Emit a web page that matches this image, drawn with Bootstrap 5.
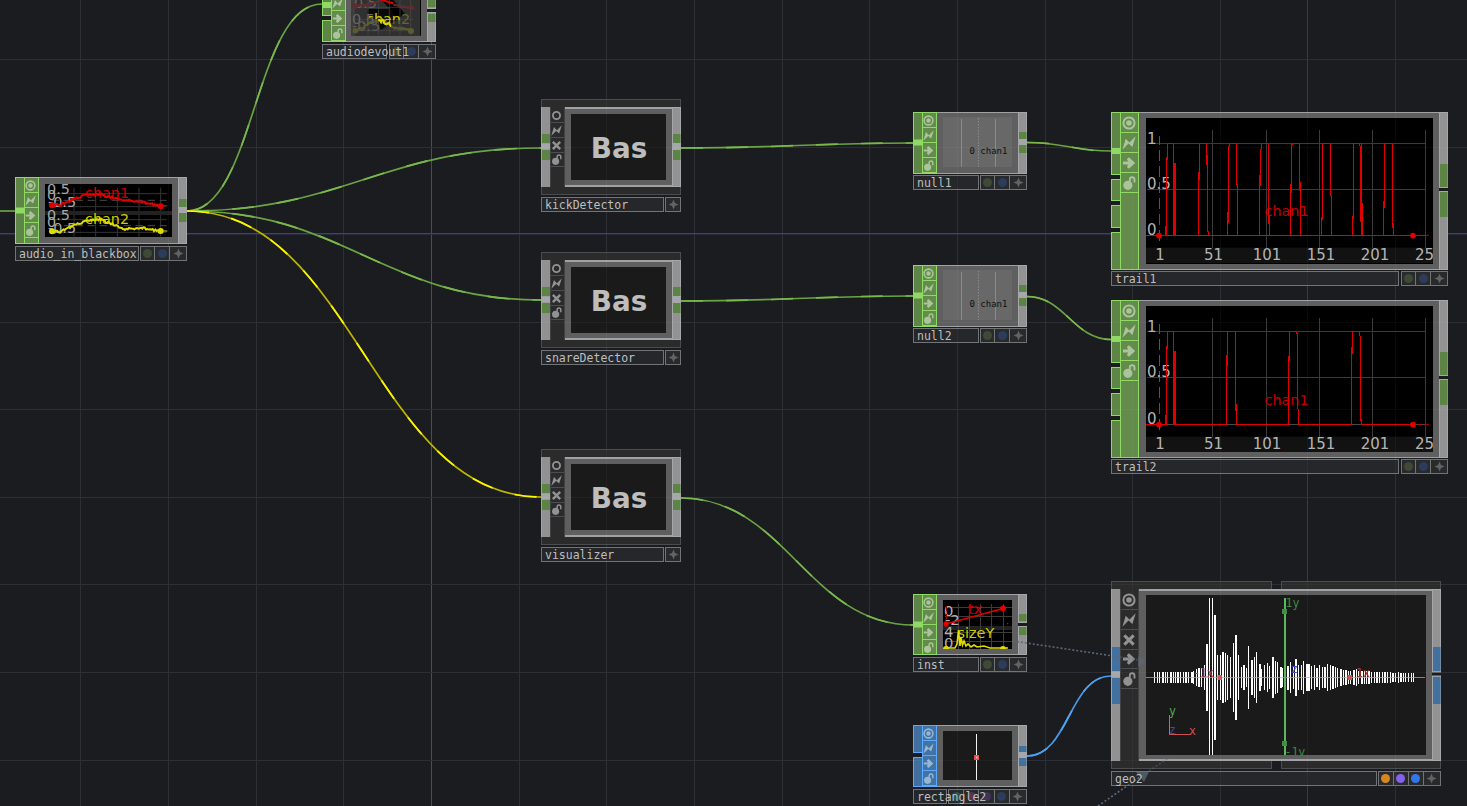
<!DOCTYPE html>
<html lang="en">
<head>
<meta charset="utf-8">
<meta name="viewport" content="width=device-width, initial-scale=1">
<title>Network editor</title>
<link href="https://cdn.jsdelivr.net/npm/bootstrap@5.3.0/dist/css/bootstrap.min.css" rel="stylesheet">
<style>
  body { background: #1b1c20; font-family: "DejaVu Sans Mono", "Liberation Mono", monospace; }
  .network { height: 806px; width: 1467px; }
  .layer { position: absolute; left: 0; top: 0; pointer-events: none; }
  .op { position: absolute; }
  .cap-row { height: 8px; gap: 9px; }
  .cap-row > div { background: #2b2b2b; border: 1px solid #4b4c50; border-width: 1px 1px 0; }
  .cap-row.under > div { border-width: 0 1px 1px; }
  .op svg { display: block; flex: none; }
  .flagcol { flex: none; border: 1px solid #414246; border-width: 0 1px; background: #2b2b2b; color: #929292; }
  .flagcell { flex: none; border-bottom: 1px solid #4c4d51; padding: 1px 2px 0 0; }
  .chop .flagcol { background: #628b4c; border-color: #8fd965; border-width: 1px; color: #abc49c; }
  .chop .flagcell { border-color: #8fd965; }
  .sop .flagcol { background: #4273a4; border-color: #5aabff; border-width: 1px; color: #98b5d2; }
  .sop .flagcell { border-color: #5aabff; }
  .frame { background: #5f5f5f; border: solid #a0a1a5; border-width: 1px 0 1px; }
  .comp .frame { border-width: 2px 0; }
  .namebar { height: 16px; }
  .namebox { background: #25272a; border: 1px solid #727377; height: 15px; color: #bebebe; font-size: 11.5px; line-height: 15px; padding-left: 3px; white-space: pre; }
  .namebox span { position: relative; z-index: 2; }
  .cells { background: #292a2b; border: 1px solid #727377; height: 15px; }
  .cells > div + div { border-left: 1px solid #727377; }
  .pip { width: 9px; height: 9px; border-radius: 50%; }
  .sans { font-family: "DejaVu Sans", sans-serif; font-size: 14.4px; }
  .sans.axis { font-size: 15px; }
  .sans.tight { font-size: 14.8px; }
  .mono { font-family: "DejaVu Sans Mono", monospace; }
</style>
</head>
<body class="m-0 overflow-hidden">
<svg width="0" height="0" class="position-absolute">
  <defs>
    <symbol id="i-target" viewBox="0 0 12 12"><circle cx="6" cy="6" r="4.8" fill="none" stroke="currentColor" stroke-width="1.7"/><circle cx="6" cy="6" r="2.4" fill="currentColor"/></symbol>
    <symbol id="i-ring" viewBox="0 0 12 12"><circle cx="6" cy="6" r="3.9" fill="none" stroke="currentColor" stroke-width="2"/></symbol>
    <symbol id="i-bolt" viewBox="0 0 12 12"><path d="M0.3 11.7 3.2 2.3 6.4 5.6 11.8.3 8.9 9.4 5.6 6.5Z" fill="currentColor"/></symbol>
    <symbol id="i-x" viewBox="0 0 12 12"><path d="M2 2 10 10M10 2 2 10" stroke="currentColor" stroke-width="2.6"/></symbol>
    <symbol id="i-arrow" viewBox="0 0 12 12"><path d="M.8 4.8H5.2L4.2 2.6 6 1 11.3 6 6 11 4.2 9.4 5.2 7.2H.8Z" fill="currentColor"/></symbol>
    <symbol id="i-lock" viewBox="0 0 12 12"><circle cx="5" cy="8" r="3.9" fill="currentColor"/><path d="M6.7 5V3.1a2 2 0 0 1 4 0V5.6" fill="none" stroke="currentColor" stroke-width="1.6"/></symbol>
    <symbol id="i-plus" viewBox="0 0 12 12"><path d="M6 .5 7.6 4.4 11.5 6 7.6 7.6 6 11.5 4.4 7.6.5 6 4.4 4.4Z" fill="#636363"/></symbol>
  </defs>
</svg>

<main class="network position-relative overflow-hidden" id="network">
  <svg class="layer" id="grid" width="1467" height="806"></svg>
  <svg class="layer" width="1467" height="806" fill="none" stroke="#6aa344" stroke-width="1.7" id="wires"></svg>
</main>

<script src="https://cdn.jsdelivr.net/npm/bootstrap@5.3.0/dist/js/bootstrap.bundle.min.js"></script>
<script>
const net = document.getElementById('network');

// background grid, one major line every ten units
function gridLines(minor, vmajor, hmajor) {
  let s = '';
  for (let i = 0; i < 16; i++) {
    const x = Math.floor(80.9 + i * 87.65), major = i === 4 || i === 14;
    s += `<path d="M${x - (i === 14 ? 1 : 0) + .5} 0V806" stroke="${i === 4 ? vmajor : major ? hmajor : minor}"/>`;
  }
  for (let i = 0; i < 9; i++) {
    const y = Math.floor(59.4 + i * 87.6);
    if (i !== 2) s += `<path d="M0 ${y + .5}H1467" stroke="${minor}"/>`;
  }
  return s;
}
document.getElementById('grid').innerHTML = gridLines('#26272f', '#46435e', '#303052') + '<path d="M0 233.5H1467" stroke="#41406c"/><path d="M0 234.5H1467" stroke="#292a42"/>';

// wires, with a lighter dash running along each
const wires = [
  [187, 211, 322, 4, .5], [187, 211, 541, 148], [187, 211, 541, 300],
  [187, 211, 541, 497, .47, '#bcb600', '#fbf600'], [681, 148, 913, 143], [681, 301, 913, 296],
  [1027, 142.5, 1111, 151], [1027, 296.5, 1111, 339.5], [681, 498, 913, 625],
  [1027, 756, 1111, 676, .5, '#479be8', '#4ea3f0']
];
document.getElementById('wires').innerHTML = '<path d="M0 211H15"/>' + wires.map(([a, b, c, d, k = .45, col, hi]) => {
  const h = (c - a) * k, p = `M${a} ${b}C${a + h} ${b} ${c - h} ${d} ${c} ${d}`;
  return `<path d="${p}" ${col ? `stroke="${col}"` : ''}/><path d="${p}" stroke="${hi || '#7ab84c'}" stroke-dasharray="22 23"/>`;
}).join('');

const FAM = {
  chop: { hi: '#8fd965', fill: '#5d8546', port: '#5c8444' },
  sop: { hi: '#5aabff', fill: '#41709f', port: '#42719f' },
  comp: { port: '#5c8444' }, geo: { port: '#42719f' }
};
const PIPS = { g: '#3e4a35', b: '#2b3c5c', t: '#28504c', m: '#56344f', v: '#3e3558', O: '#d6881d', V: '#8463ea', B: '#3277ea' };

function inputCol(o) {
  const f = FAM[o.fam];
  let s = '';
  if (f.hi) {
    o.ins.forEach(([a, b]) => s += `<rect x=".5" y="${a - o.y + .5}" width="9" height="${b - a - 1}" fill="${f.fill}" stroke="${f.hi}"/>`);
    if (o.plug) s += `<rect x="0" y="${o.plug - o.y - 3}" width="9" height="6" fill="${f.hi}"/>`;
  } else {
    s += `<rect width="9" height="${o.h}" fill="#919191"/><rect width="1" height="${o.h}" fill="#a3a3a6"/>`;
    o.ins.forEach(([a, b]) => s += `<rect x="1" y="${a - o.y}" width="8" height="${b - a}" fill="${f.port}"/>`);
    s += `<rect y="${o.plug - o.y - 3}" width="9" height="6" fill="#a6a7aa"/>`;
  }
  return `<svg width="9" height="${o.h}">${s}</svg>`;
}
function outputCol(o) {
  const f = FAM[o.fam];
  let s = `<rect width="9" height="${o.h}" fill="#929292"/><path d="M.5 0V${o.h}M0 .5H9M0 ${o.h - .5}H9M8.5 0V${o.h}" stroke="#a6a7aa"/>`;
  o.outs.forEach(([a, b]) => s += `<rect x="1" y="${a - o.y}" width="7.5" height="${b - a}" fill="${f.port}"/>`);
  if (o.split) s += `<rect y="${o.split - o.y - 2.5}" width="9" height="5" fill="#a6a7aa"/><rect y="${o.split - o.y - 1.5}" width="9" height="3" fill="#1b1c20"/>`;
  else s += `<rect y="${(o.outs[0][1]) - o.y}" width="9" height="${o.outs[1][0] - o.outs[0][1]}" fill="#a6a7aa"/>`;
  return `<svg width="9" height="${o.h}">${s}</svg>`;
}
function cells(list) {
  return list.split('').map(c => `<div class="d-flex flex-fill align-items-center justify-content-center">` +
    (c === '+' ? '<svg width="11" height="11"><use href="#i-plus"/></svg>' : `<div class="pip" style="background:${PIPS[c]}"></div>`) + '</div>').join('');
}
function addOp(o) {
  const big = o.pitch > 18, comp = o.fam === 'comp' || o.fam === 'geo';
  const cap = comp ? (o.fam === 'geo' ? '<div style="width:161px"></div><div class="flex-fill"></div>' : '<div class="w-100"></div>') : '';
  const sz = big ? 14 : 11;
  const flags = o.flags.map((n, i) => `<div class="flagcell d-flex align-items-center justify-content-center" style="height:${i ? o.pitch : o.pitch + (comp ? 1.2 : .5)}px"><svg width="${sz}" height="${sz}"><use href="#i-${n}"/></svg></div>`).join('');
  const [vx, vy, vw, vh] = o.view;
  const fx = o.x + 9 + o.fw;
  const el = document.createElement('section');
  el.className = `op ${comp ? 'comp' : o.fam}`;
  el.style.cssText = `left:${o.x}px;top:${o.y - (comp ? 8 : 0)}px;width:${o.w}px`;
  const bt = comp ? 2 : 1;
  el.innerHTML =
    (cap ? `<div class="cap-row d-flex">${cap}</div>` : '') +
    `<div class="d-flex" style="height:${o.h}px">${inputCol(o)}
      <div class="flagcol d-flex flex-column" style="width:${o.fw}px">${flags}</div>
      <div class="frame flex-fill" style="padding:${vy - o.y - bt}px 0 0 ${vx - fx}px"><svg width="${vw}" height="${vh}" viewBox="${vx} ${vy} ${vw} ${vh}">${o.draw}</svg></div>
      ${outputCol(o)}</div>` +
    (cap ? `<div class="cap-row under d-flex">${cap}</div>` : '') +
    `<div class="namebar d-flex justify-content-between" style="margin-top:${o.gap}px"><div class="namebox" style="width:${o.nw}px"><span>${o.name}</span></div><div class="cells d-flex" style="width:${o.cells.length * 15.8}px">${cells(o.cells)}</div></div>`;
  net.appendChild(el);
}

const std = ['target', 'bolt', 'arrow', 'lock'], cmp = ['ring', 'bolt', 'x', 'lock'];
const bg = (v, c) => `<rect x="${v[0]}" y="${v[1]}" width="${v[2]}" height="${v[3]}" fill="${c}"/>`;

// jittered polyline through key points
function noisy(pts, amp) {
  let d = '', s = 7;
  for (let i = 0; i < pts.length - 1; i++) {
    const [x0, y0] = pts[i], [x1, y1] = pts[i + 1];
    for (let x = x0; x < x1; x += 4) {
      s = (s * 73 + 41) % 101;
      d += `${d ? 'L' : 'M'}${x} ${(y0 + (y1 - y0) * (x - x0) / (x1 - x0) + (s / 101 - .5) * amp).toFixed(1)}`;
    }
  }
  const e = pts[pts.length - 1];
  return d + `L${e[0]} ${e[1]}`;
}

// audio_in_blackbox (drawn in thirds of a pixel from 0,165)
const audioDraw = bg([45, 184, 127, 53], '#000') + `<g transform="translate(0 165) scale(.33333)">
 <path d="M155 86H500M155 125H500M155 164H500M155 202H500M222 68V215M287 68V215M352 68V215M417 68V215M482 68V215" stroke="#353535" stroke-width="3"/>
 <rect x="135" y="138" width="381" height="12" fill="#222"/>
 <path d="M155 106H500M155 182H500" stroke="#484848" stroke-width="3" stroke-dasharray="22 14"/></g>
 <g class="sans" fill="#a8a8a8"><text x="47" y="194">0.5</text><text x="47" y="200">0</text><text x="48" y="206.5">-0.5</text><text x="47" y="220">0.5</text><text x="47" y="227">0</text><text x="48" y="232.5">-0.5</text>
 <text x="85" y="197.5" fill="#c60000">chan1</text><text x="85" y="223.5" fill="#cccc00">chan2</text></g>
 <g transform="translate(0 165) scale(.33333)" fill="none" stroke-width="6">
 <path d="${noisy([[156,121],[185,119],[222,103],[262,88],[300,89],[340,99],[390,107],[440,114],[482,123]], 7)}" stroke="#e00000"/>
 <path d="${noisy([[156,200],[182,200],[225,180],[275,164],[305,165],[345,181],[375,192],[430,190],[482,198]], 7)}" stroke="#e0dc00"/>
 <path d="M488 122H502" stroke="#e00000" stroke-width="3"/><path d="M488 198H502" stroke="#e0dc00" stroke-width="3"/>
 <g stroke="none" fill="#e00000"><circle cx="156" cy="121" r="9"/><circle cx="482" cy="124" r="9"/></g>
 <g stroke="none" fill="#e0dc00"><circle cx="156" cy="199" r="9"/><circle cx="482" cy="198" r="9"/></g></g>`;

addOp({ name: 'audio_in_blackbox', x: 15, y: 177, w: 172, h: 67, fam: 'chop', fw: 15, pitch: 14.8, flags: std, ins: [[177, 244]], plug: 210.5,
  outs: [[199, 207], [213, 222]], view: [45, 184, 127, 53], nw: 124, cells: 'gb+', gap: 2, draw: audioDraw });

const devDraw = bg([351, -15, 70, 51], '#3d3d3d') + `<rect x="355" y="-15" width="66" height="51" fill="#303030"/>
 <g transform="translate(310 0) scale(.33333)">
 <path d="M172 27H262L280 45 260 60 212 90 205 62 172 50Z" fill="#0a0a0a"/><path d="M215 0H250L285 42 262 52Z" fill="#000"/>
 <path d="M174 0V105M206 0V105M238 0V105M270 0V105M302 0V105M135 22H310M135 58H310M135 92H310" stroke="#4b4b4b" stroke-width="2"/><path d="M332 0V106" stroke="#000" stroke-width="3"/></g>
 <g class="sans"><text x="354" y="8" fill="#626262">0.5</text><text x="352" y="24" fill="#666">0.5</text><text x="352" y="31" fill="#5a5a5a">-0.5</text>
 <text x="366" y="24" fill="#65652e">chan2</text></g>
 <g class="sans" clip-path="url(#devclip)"><text x="366" y="24" fill="#c6c200" aria-hidden="true">chan</text></g><clipPath id="devclip"><path d="M369 10H400V20H390V24H382V19H369Z"/></clipPath>
 <g transform="translate(310 0) scale(.33333)" fill="none" stroke-width="6"><path d="M135 18 180 13 218 0M250 14 302 24" stroke="#66292d"/><path d="M215 0 250 10" stroke="#e00000"/>
 <path d="${noisy([[135,92],[160,82],[184,67],[214,62],[250,82],[303,92]], 7)}" stroke="#5b5b32"/><path d="${noisy([[205,60],[222,65],[243,78]], 10)}" stroke="#ddd800"/>
 <g stroke="none"><circle cx="136" cy="92" r="8" fill="#5b5b32"/><circle cx="303" cy="93" r="9" fill="#5b5b32"/><circle cx="304" cy="23" r="8" fill="#66292d"/><circle cx="136" cy="18" r="8" fill="#66292d"/></g></g>`;
addOp({ name: 'audiodevout1', x: 322, y: -20, w: 114, h: 62, fam: 'chop', fw: 15, pitch: 14.8, flags: ['target', 'bolt', 'arrow', 'lock'], ins: [[-20, 16], [20, 42]], plug: 5,
  outs: [[0, 7], [14, 22]], split: 10.5, view: [351, -15, 70, 51], nw: 65, cells: 'gb+', gap: 2, draw: devDraw });

[['kickDetector', 107], ['snareDetector', 260], ['visualizer', 457]].forEach(([name, y]) => addOp({
  name, x: 541, y, w: 140, h: 80, fam: 'comp', fw: 15, pitch: 14.8, flags: cmp, ins: [[y + 27, y + 36], [y + 43, y + 53]], plug: y + 39.5,
  outs: [[y + 27, y + 36], [y + 43, y + 53]], view: [571, y + 7, 95, 66], nw: 123, cells: '+', gap: 2,
  draw: bg([571, y + 7, 95, 66], '#1a1a1a') + `<text x="619" y="${y + 50.5}" text-anchor="middle" class="sans" style="font-size:27.8px" font-weight="700" fill="#bdbdbd">Bas</text>`
}));

[['null1', 112], ['null2', 265]].forEach(([name, y]) => addOp({
  name, x: 913, y, w: 114, h: 62, fam: 'chop', fw: 15, pitch: 14.8, flags: std, ins: [[y, y + 62]], plug: y + 30.5,
  outs: [[y + 20, y + 27], [y + 33, y + 41]], view: [943, y + 5, 69, 50], nw: 66, cells: 'gb+', gap: 1,
  draw: bg([943, y + 5, 69, 50], '#686868') + `<path d="M961.5 ${y + 7}v48M995.5 ${y + 7}v48" stroke="#8b8b8b"/><path d="M978.5 ${y + 6}v49" stroke="#8b8b8b" stroke-dasharray="1.5 1.5"/>
   <text x="969.5" y="${y + 41.5}" class="mono" font-size="9" fill="#111">0 chan1</text>`
}));

// trail charts, both share axes; paths are in thirds of a pixel from the chart origin
function trail(name, y, top, mid, base, oy, wave) {
  const v = [1146, y + 6, 287, 146];
  const d = bg(v, '#000') + `<g transform="translate(1100 ${oy}) scale(.33333)">
   <rect x="138" y="${base + 37}" width="861" height="46" fill="#121212"/>
   <g fill="none" stroke-width="3" shape-rendering="crispEdges">
   <path d="M142 ${top}H977M142 ${mid}H977M337 ${top - 40}V${base + 37}M499 ${top - 40}V${base + 37}M658 ${top - 40}V${base + 37}M817 ${top - 40}V${base + 37}M976 ${top - 40}V${base + 37}" stroke="#3a3a3a"/>
   <path d="M138 ${base}H977" stroke="#4a4a4a"/><path d="M178 ${base + 16}V${top - 22}" stroke="#555" stroke-dasharray="32 16"/></g></g>
   <g class="sans axis" fill="#b4b4b4"><text x="1147" y="${oy + top / 3 + .7}">1</text><text x="1147" y="${oy + mid / 3}">0.5</text><text x="1147" y="${oy + base / 3}">0</text>
   <g text-anchor="middle" transform="translate(0 ${oy + (base + 75) / 3})"><text x="1160">1</text><text x="1213.5">51</text><text x="1267">101</text><text x="1321">151</text><text x="1375">201</text><text x="1415" text-anchor="start">25</text></g></g>
   <text class="sans" x="1264.5" y="${oy + (base - 57) / 3 - .2}" fill="#c40000">chan1</text>
   <g transform="translate(1100 ${oy}) scale(.33333)"><path d="${wave}" fill="none" stroke="#df0000" stroke-width="3.4" shape-rendering="crispEdges"/>
   <path d="M954 ${base}h12M974 ${base}h13" stroke="#c00000" stroke-width="3"/>
   <g fill="#df0000"><circle cx="177" cy="${base + 1}" r="8.5"/><circle cx="939" cy="${base + 1}" r="8.5"/></g></g>`;
  addOp({ name, x: 1111, y, w: 337, h: 158, fam: 'chop', fw: 19, pitch: 19.8, flags: std,
    ins: [[y, y + 63], [y + 67, y + 89], [y + 93, y + 116], [y + 120, y + 158]], plug: y + 39,
    outs: [[y + 52, y + 76], [y + 80, y + 105]], split: y + 77.5, view: v, nw: 288, cells: 'gb+', gap: 1, draw: d });
}
trail('trail1', 112, 130, 268, 406, 100,
 'M138 406H198L200 201 203 130H221V190H225V406H222V190M225 406H295L297 226 299 130H319L321 168 323 388 326 406H382L384 366 386 144 389 130H409L410 249 412 260V406H478L481 168 485 130H505L507 366 509 406H571L575 136 577 130H598L600 255 602 406H664L667 333 668 130H691L692 284 694 290V406H757L761 303V130H784V312H787V406H784V312M778 130 782 145V365M787 406H850L853 272 854 130H877L878 342 880 406H939');
trail('trail2', 300, 124, 262, 403, 290,
 'M138 403H198L200 198 203 124H221V186H225V403H222V186M225 403H379L380 309 382 124H406L407 297 409 403H565L566 252 569 124H589L592 133V356L595 358V403H754L755 246 757 124H778V137L781 139V363L784 403H939');

addOp({ name: 'inst', x: 913, y: 594, w: 114, h: 61, fam: 'chop', fw: 15, pitch: 14.8, flags: std, ins: [[594, 655]], plug: 624.5,
  outs: [[614, 621], [627, 635]], split: 624.5, view: [943, 600, 69, 49], nw: 66, cells: 'gb+', gap: 2,
  draw: bg([943, 600, 69, 49], '#000') + `<rect x="943" y="626" width="69" height="4" fill="#222"/>
  <path d="M945 607.5h67M945 616.5h67M945 632.5h67M945 641.5h67M958.5 604v45M969.5 604v45M980.5 604v45M991.5 604v45M1003.5 604v45" stroke="#3c3c3c"/>
  <g class="sans tight" fill="#b4b4b4"><text x="944" y="616">0</text><text x="945" y="624.5">-2</text><text x="944" y="637">4</text><text x="944" y="648">0</text>
  <text x="968" y="613.7" fill="#c60000">tx</text></g><text class="sans" x="957.5" y="638" fill="#cccc00">sizeY</text>
  <path d="M946 624 1003 608.5" stroke="#df0000" stroke-width="1.4"/><path d="M946.5 606v19" stroke="#a00000" stroke-dasharray="5 3"/><g fill="#df0000"><circle cx="946" cy="624" r="2.7"/><circle cx="1003" cy="608.5" r="3"/><rect x="1007" y="623" width="1.3" height="1.3"/></g>
  <path d="M944 648H955L957 644 958.5 630 960 646 961 637 962.5 645 964 641 966 646 968 644 971 647 974 645 977 647 984 646 990 648H1008" fill="none" stroke="#e0dc00" stroke-width="1.6"/><circle cx="946" cy="649" r="3" fill="#e0dc00"/><circle cx="1003" cy="649" r="3" fill="#e0dc00"/>` });

addOp({ name: 'rectangle2', x: 913, y: 725, w: 114, h: 62, fam: 'sop', fw: 15, pitch: 14.8, flags: std, ins: [[725, 753], [757, 787]],
  outs: [[746, 752], [758, 766]], view: [943, 731, 69, 49], nw: 34, cells: 'tmvb+', gap: 2,
  draw: bg([943, 731, 69, 49], '#1a1a1a') + '<path d="M976.5 734v46" stroke="#f2f2f2"/><rect x="974" y="755" width="5" height="5" fill="#f04848"/><rect x="976" y="756.5" width="1.5" height="2" fill="#bcd"/>' });

// geo2 waveform: bar half-heights in thirds of a pixel
const bars = [...Array(15).fill(17), 19, 25, 29, 29, 38, 101, 238, 238, 188, 68, 68, 77, 74, 68, 62, 104, 128, 68, 31, 37, 28, 95, 53, 62, 77, 41, 26, 38, 44, 35, 62, 50, 47, 32, 29, 56, 36, 47, 35, 56, 38, 38, 50, 41, 41, 35, 38, 29, 38, 32, 32, 41, 38, 35, 32, 29, 26, 23, 23, 20, 20, 23, 26, 20, 20, 20, 20, 20, 17, 17, 17, 17, 17, 17, 17, 17, 14, 14, 17, 14, 14, 14, 14, 14, 14];
const wide = new Set([3, 6, 9, 12, 14, 17, 20, 23, 26, 31, 34, 37, 40, 45, 48, 51, 54, 58, 59, 62, 65, 68, 71, 73, 76, 79, 82, 85, 88, 91, 94]);
const barSvg = bars.map((h, i) => {
  const x = Math.round(1154 + i * 2.617 - (wide.has(i) ? .1 : -.2));
  return `<rect x="${x}" y="${Math.round(677.5 - h / 3)}" width="${wide.has(i) ? 2 : 1}" height="${Math.round(h / 1.5)}"/>`;
}).join('');
addOp({ name: 'geo2', x: 1111, y: 589, w: 330, h: 172, fam: 'geo', fw: 19, pitch: 19.8, flags: ['target', 'bolt', 'x', 'arrow', 'lock'],
  ins: [[647, 671], [678, 704]], plug: 674.5, outs: [[647, 671], [677, 704]], split: 674, view: [1146, 595, 280, 160], nw: 266, cells: 'OVB+', gap: 2,
  draw: bg([1146, 595, 280, 160], '#1a1a1a') + `<path d="M1146 677.5H1425" stroke="#d85c5c"/>
  <g fill="#fff" shape-rendering="crispEdges">${barSvg}</g>
  <path d="M1146 677.5H1425" stroke="#e06060" opacity=".45"/><path d="M1285 598V755" stroke="#59b95c" stroke-width="2"/>
  <g fill="#3f9043"><rect x="1282" y="609" width="5" height="5"/><rect x="1282" y="741" width="5" height="5"/></g><g fill="#cf5454"><rect x="1217.5" y="675" width="4.5" height="5"/><rect x="1347.5" y="675" width="4.5" height="5"/></g>
  <g class="mono" font-size="11.5"><g fill="#3b8b3e"><text x="1285.5" y="606.5">1y</text><text x="1284.5" y="755.5">-1y</text></g><g fill="#a33d3d"><text x="1193" y="677">-1x</text><text x="1356" y="677">1x</text></g><text x="1291" y="672.5" fill="#4b4bce">z</text>
  <text x="1169" y="715" fill="#4cab50">y</text><text x="1169" y="734" fill="#4444bb">z</text><text x="1189" y="735" fill="#cf5050">x</text></g>
  <path d="M1169.5 715V734" stroke="#4cab50"/><path d="M1169 734.5H1191" stroke="#cf5050"/>` });

// faint grid and reference links drawn over the operators
net.insertAdjacentHTML('beforeend', `<svg class="layer" width="1467" height="806"><g opacity=".03">${gridLines('#fff', '#fff', '#fff')}</g>
 <g stroke="#5b6977" stroke-width="1.6" stroke-dasharray="2 2" fill="none"><path d="M1013 641 1120 657"/><path d="M1120 657 1138 660" opacity=".5"/><path d="M1098 806 1140 777"/><path d="M1149 771 1170 757" opacity=".5"/></g>
 <g fill="#5b6977"><path d="M1136 772H1149L1144 782Z" opacity=".75"/><path d="M1138 656 1146 661.5 1138 667Z" opacity=".6"/></g></svg>`);
</script>
</body>
</html>
